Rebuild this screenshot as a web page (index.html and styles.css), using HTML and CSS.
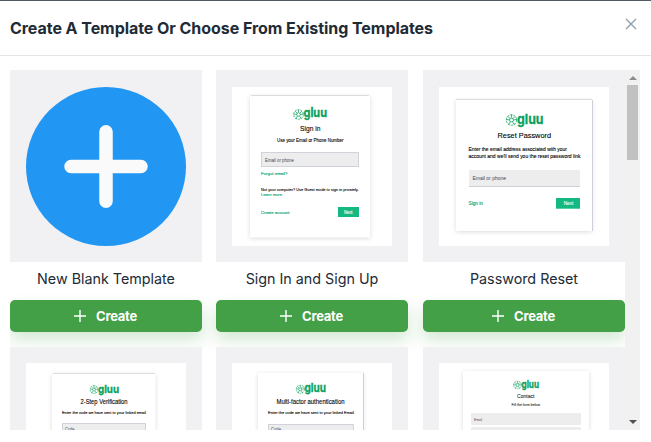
FILE: index.html
```
<!DOCTYPE html>
<html lang="en">
<head>
<meta charset="utf-8">
<title>Templates</title>
<link rel="stylesheet" href="styles.css">
</head>
<body>
<svg class="defs" aria-hidden="true">
  <symbol id="mark" viewBox="0 0 20 20">
    <g fill="none" stroke="#0aa15d" stroke-width="1.3">
      <circle cx="10" cy="10" r="8.7" stroke-dasharray="4 1.4"/>
      <circle cx="10" cy="10" r="3.3"/>
      <path d="M10 1v5M1 9l6 1M19 9l-6 1M5 18l3-5M15 18l-3-5M4 4l4 4M16 4l-4 4"/>
    </g>
  </symbol>
  <symbol id="plus" viewBox="0 0 12 12">
    <path d="M6 0v12M0 6h12" stroke="#fff" stroke-width="1.4" fill="none"/>
  </symbol>
</svg>
<section class="dialog">
  <header class="header">
    <h1 class="title">Create A Template Or Choose From Existing Templates</h1>
    <button class="close" aria-label="Close"><svg width="12" height="12" viewBox="0 0 12 12"><path d="M1 1l10 10M11 1L1 11" stroke="#8f9fae" stroke-width="1.4" fill="none"/></svg></button>
  </header>
  <div class="body">
    <div class="grid">
      <article class="card">
        <div class="preview">
          <svg class="thumb" viewBox="26 87 160 159" preserveAspectRatio="none">
            <ellipse cx="106" cy="166.5" rx="80" ry="79.5" fill="#2196f3"/>
            <path d="M106 131.7v69.600M71 166.500h70" stroke="#fafafa" stroke-width="13.500" stroke-linecap="round"/>
          </svg>
        </div>
        <h2 class="name">New Blank Template</h2>
        <button class="create"><svg width="12" height="12"><use href="#plus"/></svg><span>Create</span></button>
      </article>
      <article class="card">
        <div class="preview">
          <svg class="thumb page" viewBox="232 87 160 159">
            <rect class="sheet" x="250" y="95.500" width="120" height="142"/>
            <path class="edge" d="M251 95.500h118"/>
            <use href="#mark" x="293" y="109" width="11" height="11"/>
            <text class="brand" x="303.500" y="117" font-size="12.500" textLength="23.500" lengthAdjust="spacingAndGlyphs">gluu</text>
            <text class="head" x="300" y="130.700" font-size="7.300" textLength="20.500" lengthAdjust="spacingAndGlyphs">Sign in</text>
            <text class="note" x="277" y="142" font-size="5.200" textLength="66.500" lengthAdjust="spacingAndGlyphs">Use your Email or Phone Number</text>
            <rect class="input" x="261.500" y="152.500" width="97" height="14"/>
            <text class="hint" x="265" y="161.500" font-size="4.800" textLength="29" lengthAdjust="spacingAndGlyphs">Email or phone</text>
            <text class="link" x="261" y="174.500" font-size="4.300" textLength="26.500" lengthAdjust="spacingAndGlyphs">Forgot email?</text>
            <text class="note" x="261" y="190.700" font-size="4.400" textLength="97.500" lengthAdjust="spacingAndGlyphs">Not your computer? Use Guest mode to sign in privately.</text>
            <text class="link" x="261" y="196" font-size="4.300" textLength="21" lengthAdjust="spacingAndGlyphs">Learn more</text>
            <text class="link" x="261" y="214" font-size="4.300" textLength="28.500" lengthAdjust="spacingAndGlyphs">Create account</text>
            <rect class="next" x="338" y="207" width="21" height="10"/>
            <text class="light" x="344" y="214" font-size="4.500" textLength="8.500" lengthAdjust="spacingAndGlyphs">Next</text>
          </svg>
        </div>
        <h2 class="name">Sign In and Sign Up</h2>
        <button class="create"><svg width="12" height="12"><use href="#plus"/></svg><span>Create</span></button>
      </article>
      <article class="card">
        <div class="preview">
          <svg class="thumb page" viewBox="439 87 170 159">
            <rect class="sheet" x="456" y="99.500" width="136" height="131.500"/>
            <path class="edge" d="M456 99.500h136"/>
            <path class="edge side" d="M592.500 100v131"/>
            <use href="#mark" x="505.500" y="114" width="12" height="12"/>
            <text class="brand" x="517" y="123.500" font-size="13.500" textLength="26.500" lengthAdjust="spacingAndGlyphs">gluu</text>
            <text class="head" x="497.500" y="138" font-size="7.500" textLength="53.500" lengthAdjust="spacingAndGlyphs">Reset Password</text>
            <text class="note" x="468.500" y="151" font-size="5.200" textLength="98.500" lengthAdjust="spacingAndGlyphs">Enter the email address associated with your</text>
            <text class="note" x="468.500" y="158" font-size="5.200" textLength="112" lengthAdjust="spacingAndGlyphs">account and we'll send you the reset password link</text>
            <rect class="input base" x="469" y="170" width="111" height="16.500"/>
            <path class="edge side" d="M469 186.500h111"/>
            <text class="hint" x="472.500" y="180" font-size="5.200" textLength="33.500" lengthAdjust="spacingAndGlyphs">Email or phone</text>
            <text class="link" x="468.500" y="205" font-size="5" textLength="14.500" lengthAdjust="spacingAndGlyphs">Sign in</text>
            <rect class="next" x="556" y="198" width="24" height="10.700"/>
            <text class="light" x="563.700" y="205.300" font-size="5" textLength="9.500" lengthAdjust="spacingAndGlyphs">Next</text>
          </svg>
        </div>
        <h2 class="name">Password Reset</h2>
        <button class="create"><svg width="12" height="12"><use href="#plus"/></svg><span>Create</span></button>
      </article>
      <article class="card">
        <div class="preview lower">
          <svg class="thumb page" viewBox="26 363 160 159">
            <rect class="sheet" x="52" y="373.500" width="103.500" height="140"/>
            <path class="edge" d="M53 373.500h102"/>
            <use href="#mark" x="89.500" y="385" width="9" height="9"/>
            <text class="brand" x="98" y="392.500" font-size="11" textLength="21" lengthAdjust="spacingAndGlyphs">gluu</text>
            <text class="head" x="80.500" y="404" font-size="6.800" textLength="47" lengthAdjust="spacingAndGlyphs">2-Step Verification</text>
            <text class="note" x="62" y="414.200" font-size="4.300" textLength="84" lengthAdjust="spacingAndGlyphs">Enter the code we have sent to your linked email</text>
            <rect class="input" x="62.500" y="423.500" width="83" height="13"/>
            <text class="hint" x="65" y="431" font-size="4.500" textLength="9.500" lengthAdjust="spacingAndGlyphs">Code</text>
          </svg>
        </div>
      </article>
      <article class="card">
        <div class="preview lower">
          <svg class="thumb page" viewBox="232 363 160 159">
            <rect class="sheet" x="258" y="373" width="105" height="140"/>
            <path class="edge side" d="M363.500 373v140"/>
            <use href="#mark" x="295.500" y="384.500" width="9.500" height="9.500"/>
            <text class="brand" x="304.500" y="392" font-size="11.200" textLength="21.500" lengthAdjust="spacingAndGlyphs">gluu</text>
            <text class="head" x="276.500" y="404.300" font-size="6.800" textLength="68" lengthAdjust="spacingAndGlyphs">Multi-factor authentication</text>
            <text class="note" x="268" y="414.200" font-size="4.300" textLength="86" lengthAdjust="spacingAndGlyphs">Enter the code we have sent to your linked Email</text>
            <rect class="input" x="268.500" y="424.500" width="85" height="13"/>
            <text class="hint" x="271" y="431" font-size="4.500" textLength="10" lengthAdjust="spacingAndGlyphs">Code</text>
          </svg>
        </div>
      </article>
      <article class="card">
        <div class="preview lower">
          <svg class="thumb page" viewBox="439 363 170 159">
            <rect class="sheet" x="463" y="371" width="126" height="142"/>
            <use href="#mark" x="513" y="380.500" width="9" height="9"/>
            <text class="brand" x="521.500" y="388" font-size="10" textLength="17.500" lengthAdjust="spacingAndGlyphs">gluu</text>
            <text class="head soft" x="517" y="398" font-size="5.400" textLength="17.500" lengthAdjust="spacingAndGlyphs">Contact</text>
            <text class="note soft" x="511.500" y="406.200" font-size="4" textLength="28.500" lengthAdjust="spacingAndGlyphs">Fill the form below</text>
            <rect class="input base" x="471" y="413" width="110" height="12" rx="1"/>
            <text class="hint" x="474" y="420.500" font-size="4" textLength="8" lengthAdjust="spacingAndGlyphs">Email</text>
            <rect class="input base" x="471" y="427" width="110" height="12" rx="1"/>
          </svg>
        </div>
      </article>
    </div>
    <div class="scrollbar">
      <i class="arrow up"></i>
      <i class="handle"></i>
      <i class="arrow down"></i>
    </div>
  </div>
</section>
</body>
</html>
```
FILE: styles.css
```
* { box-sizing: border-box; }
body { margin: 0; background: #515965; font-family: Inter, "Liberation Sans", sans-serif; color: #212b36; }
button { border: 0; padding: 0; margin: 0; font: inherit; }
.defs { display: block; width: 0; height: 0; }
.dialog { margin-top: 1px; height: 441px; background: #fff; overflow: hidden; }
.header { display: flex; justify-content: space-between; align-items: flex-start; height: 55px; padding: 17px 14px 0 10px; border-bottom: 1px solid #e3e5e7; }
.title { margin: 0; font-size: 16px; line-height: 20px; font-weight: 700; letter-spacing: -0.05px; white-space: nowrap; }
.close { display: flex; background: none; }
.body { display: flex; height: 360px; margin: 14px 11px 0 10px; overflow: hidden; }
.grid { display: grid; grid-template-columns: 206px 207px 202px; row-gap: 15px; align-content: start; width: 615px; height: 360px; overflow: hidden; }
.card { width: 192px; }
.card:nth-child(3n) { width: 202px; }
.preview { display: flex; height: 192px; padding: 17px 16px 16px; background: #f1f1f4; position: relative; }
.lower { padding-top: 16px; }
.thumb { display: block; width: 100%; height: 159px; }
.page { background: #fff; font-family: "Liberation Sans", sans-serif; fill: #000; }
.sheet { fill: #fff; filter: drop-shadow(0 1.5px 2px #00000024); }
.edge { stroke: #dddde0; stroke-width: 1; fill: none; }
.side { stroke: #cfcfd9; }
.brand { fill: #0aa15d; stroke: #0aa15d; stroke-width: 0.3; font-family: Inter, sans-serif; font-weight: 700; }
.head { stroke: #000; stroke-width: 0.1; }
.note { stroke: #000; stroke-width: 0.1; }
.soft { fill: #333; stroke: #333; }
.input { fill: #ededed; stroke: #d2d3da; stroke-width: 1; }
.base { stroke: none; }
.hint { fill: #3f4756; }
.link { fill: #10a875; stroke: #10a875; stroke-width: 0.15; }
.next { fill: #14b981; }
.light { fill: #fff; stroke: #fff; stroke-width: 0.1; }
.name { margin: 0; height: 38px; padding-top: 7px; text-align: center; font-size: 14.3px; line-height: 20px; font-weight: 400; white-space: nowrap; }
.create { display: flex; align-items: center; justify-content: center; gap: 10px; width: 100%; height: 32px; padding-right: 1px; border-radius: 5px; background: #43a047; color: #fff; font-size: 13px; font-weight: 700; letter-spacing: -0.25px; box-shadow: 0 8px 16px #43a0473d; }
.scrollbar { display: flex; flex-direction: column; align-items: center; width: 15px; height: 360px; background: #f1f1f1; }
.arrow { border: 4px solid transparent; border-top-width: 0; border-bottom-width: 0; }
.up { margin-top: 6px; border-bottom: 4px solid #8c8c8c; }
.handle { width: 11px; height: 75px; margin-top: 5px; background: #c1c1c1; }
.down { margin-top: auto; margin-bottom: 6px; border-top: 4px solid #505050; }
```
